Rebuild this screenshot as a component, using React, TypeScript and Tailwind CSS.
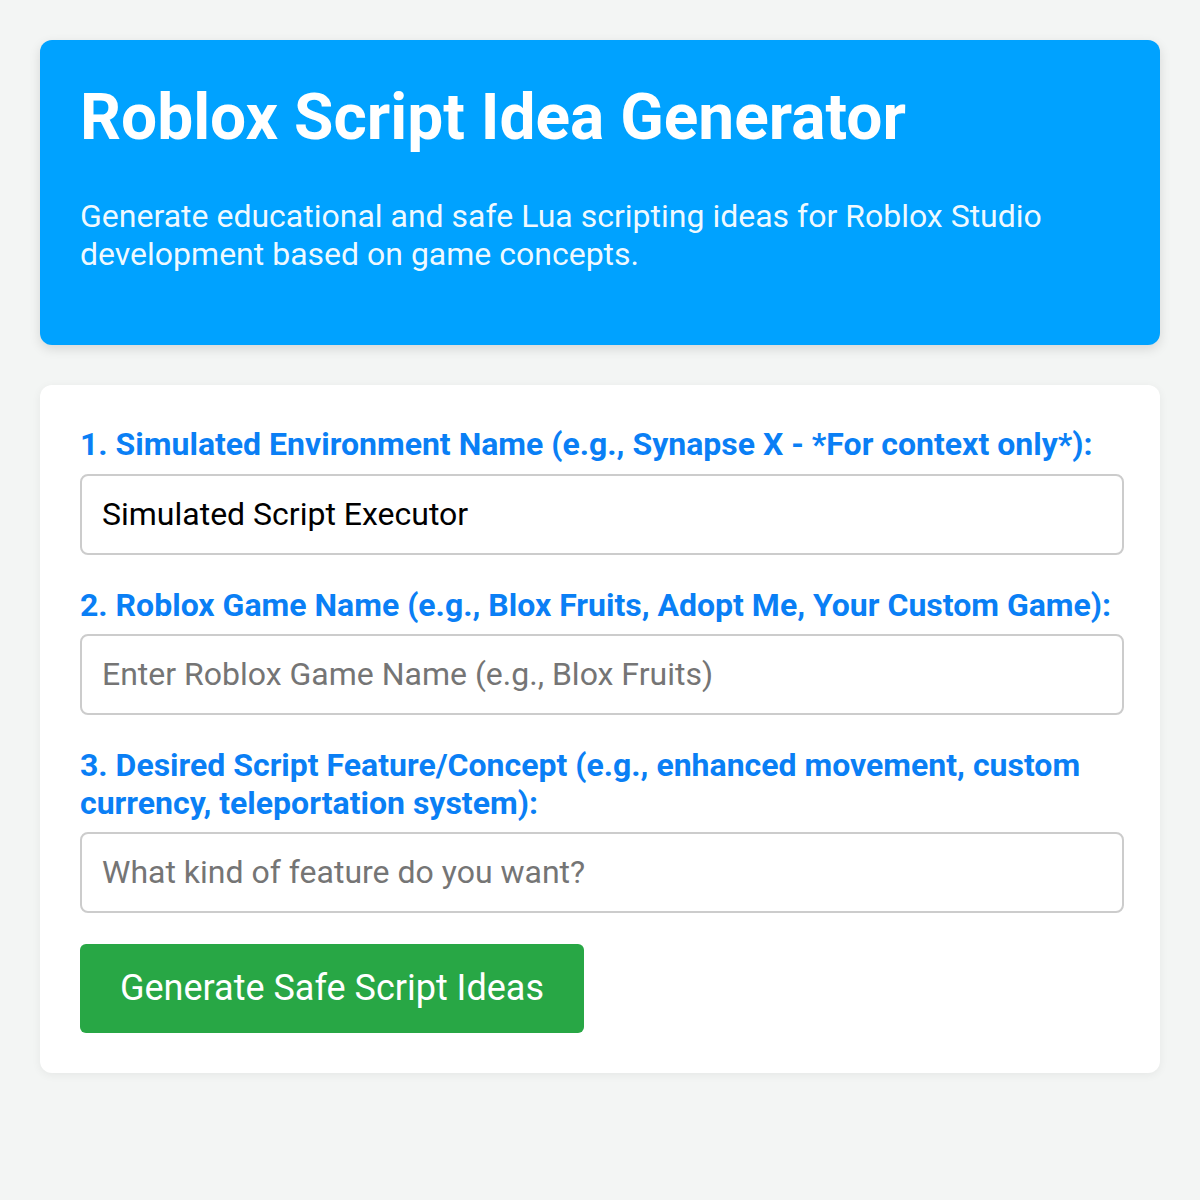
import React from "react";

export default function App() {
  return (
    <div className="min-h-[1200px] w-full bg-[#f3f5f4] p-[40px]" style={{ fontFamily: "Roboto, 'Noto Sans', sans-serif" }}>
      <div className="rounded-[12px] bg-[#00a2ff] px-[40px] pt-[40px] pb-[72px] text-white shadow-[0_4px_12px_rgba(0,0,0,0.12)]">
        <h1 className="text-[64px] font-bold leading-[1.2]">Roblox Script Idea Generator</h1>
        <p className="mt-[40px] text-[32px] leading-[38px] text-white/95">
          Generate educational and safe Lua scripting ideas for Roblox Studio development based on game concepts.
        </p>
      </div>

      <div className="mt-[40px] rounded-[12px] bg-white p-[40px] shadow-[0_2px_10px_rgba(0,0,0,0.06)]">
        <label className="block text-[32px] font-bold leading-[38px] text-[#0a7ff5]">
          1. Simulated Environment Name (e.g., Synapse X - *For context only*):
        </label>
        <input
          className="mt-[11px] block h-[81px] w-[calc(100%+4px)] rounded-[8px] border-2 border-[#cccccc] px-[20px] text-[32px] text-black outline-none placeholder:text-[#757575]"
          defaultValue="Simulated Script Executor"
        />

        <label className="mt-[31px] block text-[32px] font-bold leading-[38px] text-[#0a7ff5]">
          2. Roblox Game Name (e.g., Blox Fruits, Adopt Me, Your Custom Game):
        </label>
        <input
          className="mt-[10px] block h-[81px] w-[calc(100%+4px)] rounded-[8px] border-2 border-[#cccccc] px-[20px] text-[32px] text-black outline-none placeholder:text-[#757575]"
          placeholder="Enter Roblox Game Name (e.g., Blox Fruits)"
        />

        <label className="mt-[31px] block text-[32px] font-bold leading-[38px] text-[#0a7ff5]">
          3. Desired Script Feature/Concept (e.g., enhanced movement, custom currency, teleportation system):
        </label>
        <input
          className="mt-[10px] block h-[81px] w-[calc(100%+4px)] rounded-[8px] border-2 border-[#cccccc] px-[20px] text-[32px] text-black outline-none placeholder:text-[#757575]"
          placeholder="What kind of feature do you want?"
        />

        <button className="mt-[31px] block h-[89px] rounded-[6px] bg-[#28a745] px-[40px] text-[36px] text-white">
          Generate Safe Script Ideas
        </button>
      </div>
    </div>
  );
}
